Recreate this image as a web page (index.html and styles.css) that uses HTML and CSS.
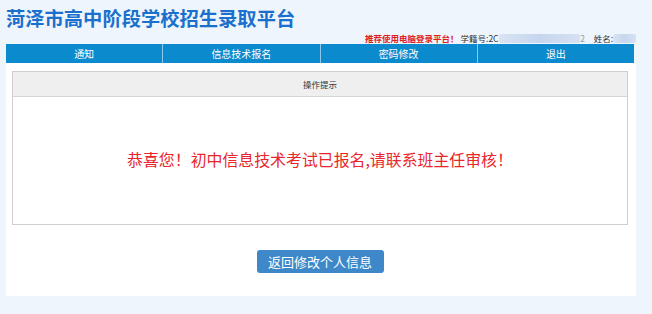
FILE: index.html
```html
<!DOCTYPE html>
<html lang="zh-CN">
<head>
<meta charset="utf-8">
<title>菏泽市高中阶段学校招生录取平台</title>
<link rel="stylesheet" href="styles.css">
</head>
<body>
<div class="page">
  <div class="header">
    <h1 class="title">菏泽市高中阶段学校招生录取平台</h1>
    <div class="info">
      <span class="tip">推荐使用电脑登录平台！</span>
      <span class="label">学籍号:2C</span><span class="blur blur-id"></span><span class="label tail">2</span>
      <span class="label name">姓名:</span><span class="blur blur-name"></span>
    </div>
  </div>
  <nav class="nav">
    <a class="nav-item">通知</a>
    <a class="nav-item">信息技术报名</a>
    <a class="nav-item">密码修改</a>
    <a class="nav-item">退出</a>
  </nav>
  <div class="panel">
    <div class="box">
      <div class="box-head">操作提示</div>
      <div class="box-body">恭喜您！初中信息技术考试已报名,请联系班主任审核！</div>
    </div>
    <div class="actions">
      <button class="btn">返回修改个人信息</button>
    </div>
  </div>
</div>
</body>
</html>
```
FILE: styles.css
```css
html, body {
  margin: 0;
  padding: 0;
}
body {
  background: #eef5fd;
  font-family: "Noto Sans CJK SC", "Noto Sans", sans-serif;
  width: 652px;
  height: 314px;
  overflow: hidden;
}
.page {
  width: 630px;
  margin-left: 6px;
}
.header {
  height: 44px;
  display: flex;
  flex-direction: column;
}
.title {
  margin: 0;
  height: 33px;
  font-size: 19.3px;
  line-height: 36px;
  font-weight: 700;
  color: #1a70cc;
  letter-spacing: 0;
  white-space: nowrap;
}
.info {
  height: 11px;
  display: flex;
  align-items: center;
  padding-left: 359px;
  font-size: 8.5px;
  line-height: 11px;
  white-space: nowrap;
}
.tip {
  color: #e02020;
  font-weight: 700;
  margin-right: 2px;
}
.label {
  color: #333;
}
.blur {
  display: inline-block;
  height: 9px;
  background: linear-gradient(90deg, #d9e4f3, #c6d6ee 50%, #d6e2f3);
  border-radius: 2px;
}
.blur-id {
  width: 86px;
}
.tail {
  color: #999;
  margin-right: 9px;
}
.blur-name {
  width: 24px;
}
.nav {
  display: flex;
  width: 628px;
  height: 19px;
  background: #0b8bcd;
}
.nav-item {
  flex: 1;
  text-align: center;
  color: #fff;
  font-size: 10px;
  line-height: 19px;
  border-left: 1px solid #8cc8ea;
}
.nav-item:first-child {
  border-left: none;
}
.panel {
  background: #fff;
  width: 630px;
  height: 233px;
  padding: 8px 8px 0 6px;
  box-sizing: border-box;
}
.box {
  border: 1px solid #cfcfcf;
  height: 154px;
  box-sizing: border-box;
  display: flex;
  flex-direction: column;
}
.box-head {
  height: 24px;
  background: #efefef;
  border-bottom: 1px solid #d6d6d6;
  text-align: center;
  font-size: 8.5px;
  line-height: 25px;
  color: #333;
}
.box-body {
  flex: 1;
  display: flex;
  align-items: center;
  justify-content: center;
  color: #e8262b;
  font-size: 15.9px;
  padding-bottom: 2px;
}
.actions {
  display: flex;
  justify-content: center;
  padding-top: 25px;
}
.btn {
  width: 127px;
  height: 23px;
  border: none;
  border-radius: 3px;
  background: #3e88ca;
  color: #fff;
  font-family: "Noto Sans CJK SC", "Noto Sans", sans-serif;
  font-size: 13px;
  line-height: 23px;
  padding: 0;
}
```
